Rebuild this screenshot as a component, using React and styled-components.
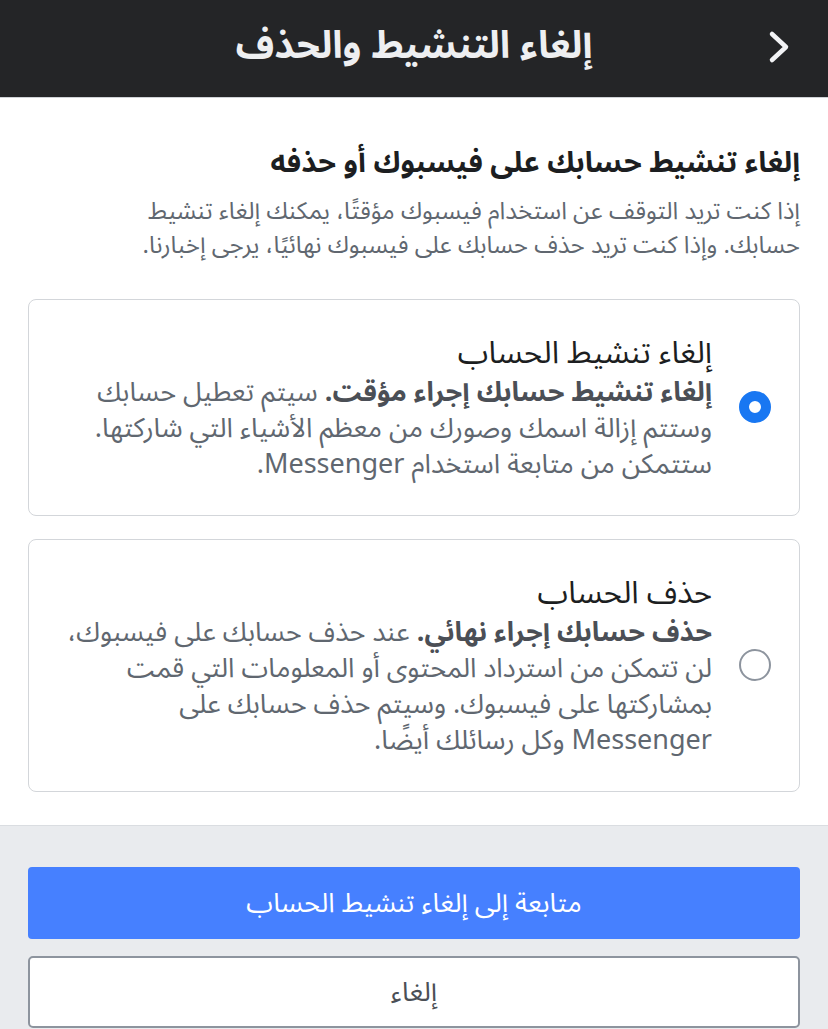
import React, { useState } from 'react'
import styled, { createGlobalStyle } from 'styled-components'

const GlobalStyle = createGlobalStyle`
  html, body {
    margin: 0;
    padding: 0;
    background: #ffffff;
  }
  body {
    font-family: "Noto Sans Arabic", "Noto Naskh Arabic", "DejaVu Sans", "Noto Sans", sans-serif;
  }
  * {
    box-sizing: border-box;
  }
`

const options = [
  {
    id: 'deactivate',
    title: 'إلغاء تنشيط الحساب',
    bold: 'إلغاء تنشيط حسابك إجراء مؤقت.',
    lines: [
      ' سيتم تعطيل حسابك',
      'وستتم إزالة اسمك وصورك من معظم الأشياء التي شاركتها.',
      'ستتمكن من متابعة استخدام Messenger.',
    ],
  },
  {
    id: 'delete',
    title: 'حذف الحساب',
    bold: 'حذف حسابك إجراء نهائي.',
    lines: [
      ' عند حذف حسابك على فيسبوك،',
      'لن تتمكن من استرداد المحتوى أو المعلومات التي قمت',
      'بمشاركتها على فيسبوك. وسيتم حذف حسابك على',
      'Messenger وكل رسائلك أيضًا.',
    ],
  },
]

export default function App() {
  const [selected, setSelected] = useState('deactivate')

  return (
    <Page dir="rtl">
      <GlobalStyle />
      <Header>
        <BackButton aria-label="رجوع">
          <svg width="24" height="34" viewBox="0 0 24 34">
            <path
              d="M4 4 L18 17 L4 30"
              fill="none"
              stroke="#f2f3f5"
              strokeWidth="4.5"
              strokeLinecap="round"
              strokeLinejoin="round"
            />
          </svg>
        </BackButton>
        <HeaderTitle>إلغاء التنشيط والحذف</HeaderTitle>
      </Header>

      <Main>
        <Heading>إلغاء تنشيط حسابك على فيسبوك أو حذفه</Heading>
        <Intro>
          إذا كنت تريد التوقف عن استخدام فيسبوك مؤقتًا، يمكنك إلغاء تنشيط
          <br />
          حسابك. وإذا كنت تريد حذف حسابك على فيسبوك نهائيًا، يرجى إخبارنا.
        </Intro>

        <OptionList>
          {options.map((opt) => (
            <OptionCard key={opt.id} onClick={() => setSelected(opt.id)}>
              <Radio $checked={selected === opt.id} />
              <OptionBody>
                <OptionTitle>{opt.title}</OptionTitle>
                <OptionText>
                  <strong>{opt.bold}</strong>
                  {opt.lines.map((line, i) => (
                    <React.Fragment key={i}>
                      {i > 0 && <br />}
                      {line}
                    </React.Fragment>
                  ))}
                </OptionText>
              </OptionBody>
            </OptionCard>
          ))}
        </OptionList>
      </Main>

      <Footer>
        <PrimaryButton>متابعة إلى إلغاء تنشيط الحساب</PrimaryButton>
        <SecondaryButton>إلغاء</SecondaryButton>
      </Footer>
    </Page>
  )
}

const Page = styled.div`
  width: 828px;
  min-height: 1029px;
  display: flex;
  flex-direction: column;
  background: #e9ebee;
`

const Header = styled.header`
  position: relative;
  height: 98px;
  background: #242527;
  border-bottom: 1px solid #cfd2d6;
  display: flex;
  align-items: center;
  justify-content: center;
`

const BackButton = styled.button`
  position: absolute;
  right: 34px;
  top: 29px;
  width: 28px;
  height: 36px;
  padding: 0;
  border: 0;
  background: none;
  display: flex;
  align-items: center;
  justify-content: center;
`

const HeaderTitle = styled.h1`
  margin: -6px 0 0;
  color: #eeeff1;
  font-size: 38px;
  font-weight: 700;
  line-height: 1;
`

const Main = styled.main`
  background: #ffffff;
  padding: 43px 28px 33px;
  border-bottom: 1px solid #dadde1;
  display: flex;
  flex-direction: column;
`

const Heading = styled.h2`
  margin: 0;
  color: #1c1e21;
  font-size: 29px;
  font-weight: 700;
  line-height: 44px;
`

const Intro = styled.p`
  margin: 10px 0 0;
  color: #606770;
  font-size: 24px;
  line-height: 34px;
`

const OptionList = styled.div`
  margin-top: 36px;
  display: flex;
  flex-direction: column;
  gap: 23px;
`

const OptionCard = styled.label`
  display: flex;
  align-items: center;
  gap: 27px;
  padding: 31px 28px 32px;
  border: 1.5px solid #d3d6da;
  border-radius: 8px;
  background: #ffffff;
  cursor: pointer;
`

const Radio = styled.span`
  flex: none;
  width: 32px;
  height: 32px;
  border-radius: 50%;
  border: ${({ $checked }) => ($checked ? '10px solid #1877f2' : '2.5px solid #8d949e')};
  background: #ffffff;
`

const OptionBody = styled.div`
  display: flex;
  flex-direction: column;
`

const OptionTitle = styled.div`
  color: #1c1e21;
  font-size: 31px;
  font-weight: 400;
  line-height: 44px;
`

const OptionText = styled.p`
  margin: 0;
  color: #606770;
  font-size: 27px;
  line-height: 36px;

  strong {
    color: #4b4f56;
    font-weight: 700;
  }
`

const Footer = styled.footer`
  flex: 1;
  padding: 41px 28px 0;
  display: flex;
  flex-direction: column;
  gap: 17px;
`

const PrimaryButton = styled.button`
  height: 72px;
  border: 0;
  border-radius: 4px;
  background: #4680ff;
  color: #ffffff;
  font-family: inherit;
  font-size: 27px;
  line-height: 1;
`

const SecondaryButton = styled.button`
  height: 72px;
  border: 2px solid #8d949e;
  border-radius: 5px;
  background: #ffffff;
  color: #4b4f56;
  font-family: inherit;
  font-size: 27px;
  line-height: 1;
`
